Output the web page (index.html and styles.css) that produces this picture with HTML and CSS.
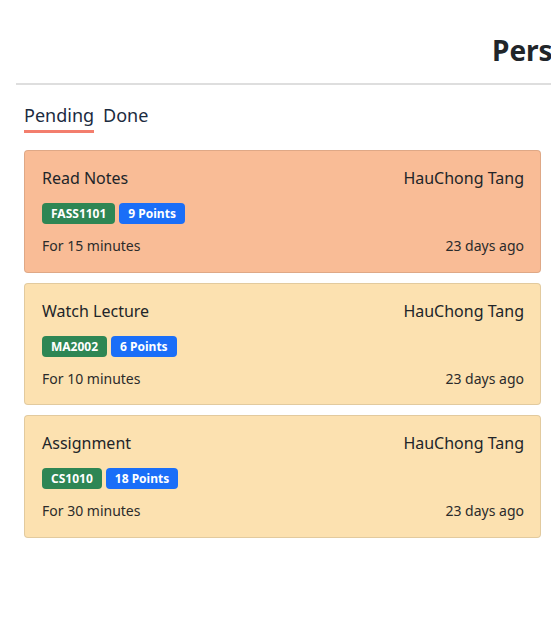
FILE: index.html
```html
<!DOCTYPE html>
<html>
<head>
<meta charset="utf-8">
<link rel="stylesheet" href="styles.css">
</head>
<body>
<div class="page">
  <header class="header">
    <h1 class="title">Personal Tasks</h1>
  </header>
  <hr class="divider">
  <nav class="tabs">
    <span class="tab active">Pending</span>
    <span class="tab">Done</span>
  </nav>
  <div class="list">
    <div class="card card-hot">
      <div class="row">
        <span class="name">Read Notes</span>
        <span class="owner">HauChong Tang</span>
      </div>
      <div class="badges">
        <span class="badge badge-mod">FASS1101</span>
        <span class="badge badge-pts">9 Points</span>
      </div>
      <div class="row meta">
        <span>For 15 minutes</span>
        <span>23 days ago</span>
      </div>
    </div>
    <div class="card card-warm">
      <div class="row">
        <span class="name">Watch Lecture</span>
        <span class="owner">HauChong Tang</span>
      </div>
      <div class="badges">
        <span class="badge badge-mod">MA2002</span>
        <span class="badge badge-pts">6 Points</span>
      </div>
      <div class="row meta">
        <span>For 10 minutes</span>
        <span>23 days ago</span>
      </div>
    </div>
    <div class="card card-warm">
      <div class="row">
        <span class="name">Assignment</span>
        <span class="owner">HauChong Tang</span>
      </div>
      <div class="badges">
        <span class="badge badge-mod">CS1010</span>
        <span class="badge badge-pts">18 Points</span>
      </div>
      <div class="row meta">
        <span>For 30 minutes</span>
        <span>23 days ago</span>
      </div>
    </div>
  </div>
</div>
</body>
</html>
```

FILE: styles.css
```css
* { box-sizing: border-box; }
html, body { margin: 0; padding: 0; background: #fff; }
body {
  font-family: "Noto Sans", "Open Sans", sans-serif;
  color: #212529;
  overflow: hidden;
}
.page { width: 551px; overflow: hidden; }
.header {
  padding: 33px 0 0 492px;
  white-space: nowrap;
  overflow: hidden;
}
.title {
  margin: 0;
  font-size: 28px;
  line-height: 34px;
  font-weight: 700;
  color: #212529;
}
.divider {
  margin: 16px 0 0 16px;
  border: 0;
  border-top: 2px solid #dedede;
  height: 0;
}
.tabs {
  display: flex;
  gap: 9px;
  padding-left: 24px;
  margin-top: 18px;
}
.tab {
  font-size: 18px;
  line-height: 24px;
  padding-bottom: 3px;
  color: #1b2b3f;
  border-bottom: 3px solid transparent;
}
.tab.active { border-bottom-color: #f37e6d; }
.list {
  display: flex;
  flex-direction: column;
  gap: 10px;
  margin: 17px 10px 0 24px;
}
.card {
  border: 1px solid rgba(0, 0, 0, 0.1);
  border-radius: 4px;
  padding: 15px 16px 16px 17px;
  height: 122.5px;
}
.card-hot { background: #f9bc96; }
.card-warm { background: #fce1b0; }
.row {
  display: flex;
  justify-content: space-between;
  align-items: center;
}
.name, .owner {
  font-size: 16px;
  line-height: 24px;
}
.badges {
  display: flex;
  gap: 4px;
  margin-top: 13px;
}
.badge {
  display: inline-block;
  font-size: 12px;
  font-weight: 700;
  line-height: 21px;
  height: 21px;
  padding: 0 9px;
  border-radius: 4px;
  color: #fff;
}
.badge-mod { background: #2e8654; }
.badge-pts { background: #1a6ef8; }
.meta {
  margin-top: 11px;
  font-size: 14px;
  line-height: 21px;
  color: #2b2b2b;
}
```
